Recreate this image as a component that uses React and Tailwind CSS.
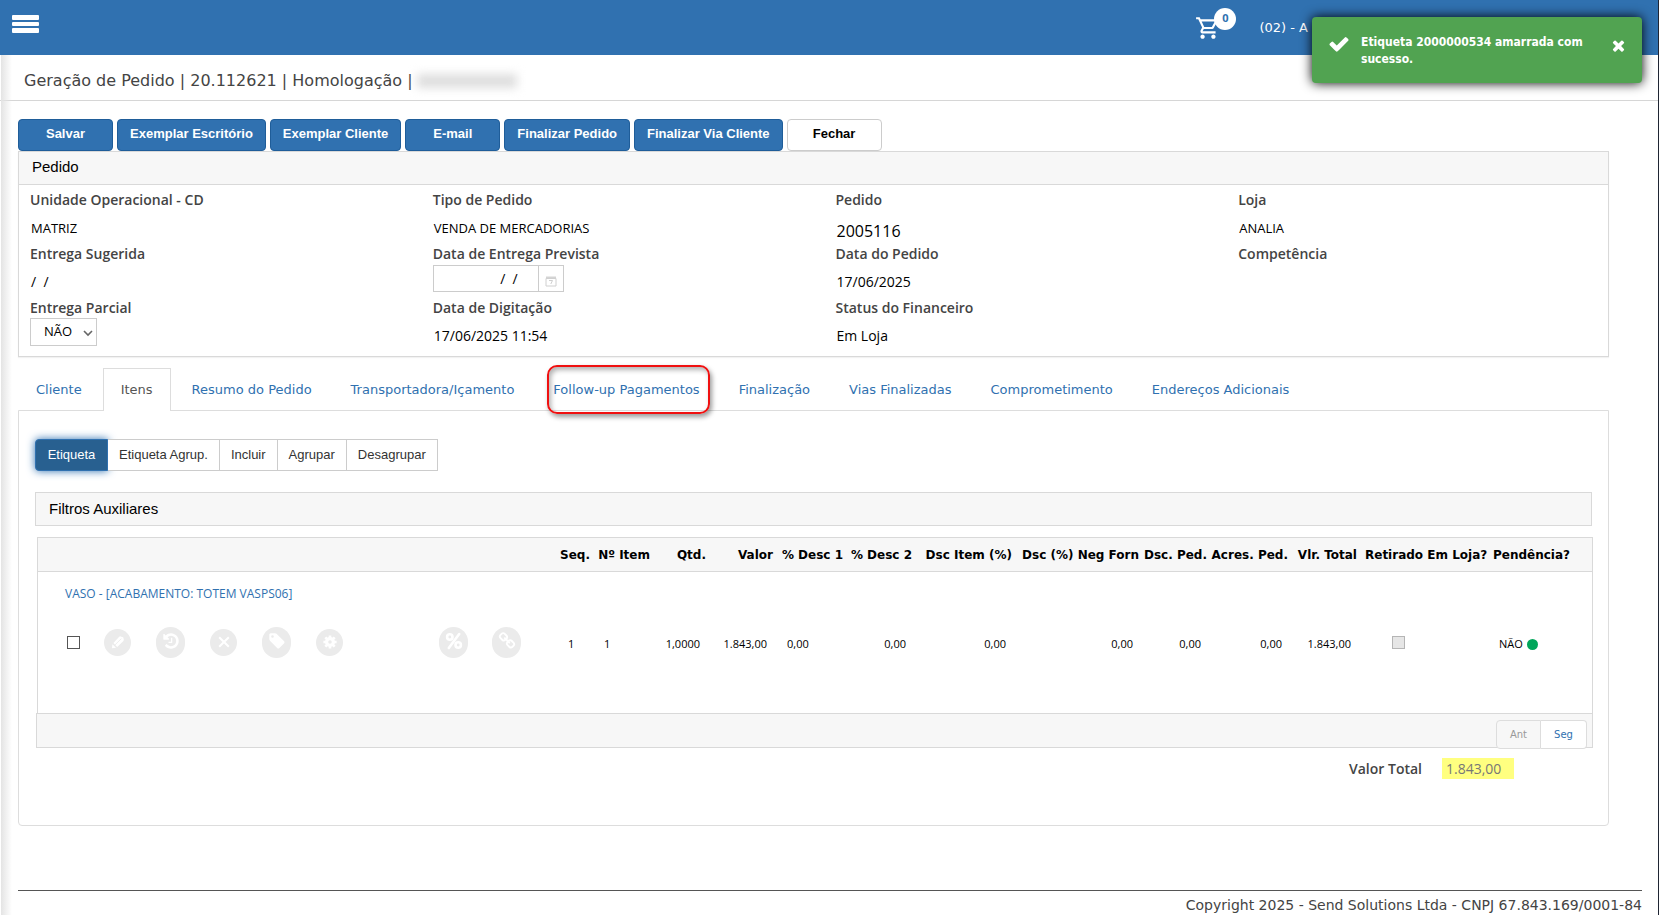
import React from 'react';
import { MdOutlineShoppingCart } from 'react-icons/md';

const ICON_PATHS = {
  check: 'M1671 566q0 40-28 68l-724 724-136 136q-28 28-68 28t-68-28l-136-136-362-362q-28-28-28-68t28-68l136-136q28-28 68-28t68 28l294 295 656-657q28-28 68-28t68 28l136 136q28 28 28 68z',
  times: 'M1490 1322q0 40-28 68l-136 136q-28 28-68 28t-68-28l-294-294-294 294q-28 28-68 28t-68-28l-136-136q-28-28-28-68t28-68l294-294-294-294q-28-28-28-68t28-68l136-136q28-28 68-28t68 28l294 294 294-294q28-28 68-28t68 28l136 136q28 28 28 68t-28 68l-294 294 294 294q28 28 28 68z',
  tag: 'M576 448q0-53-37.5-90.5t-90.5-37.5-90.5 37.5-37.5 90.5 37.5 90.5 90.5 37.5 90.5-37.5 37.5-90.5zm1067 576q0 53-37 90l-491 492q-39 37-91 37-53 0-90-37l-715-716q-38-37-64.5-101t-26.5-117v-416q0-52 38-90t90-38h416q53 0 117 26.5t102 64.5l715 714q37 39 37 91z',
  history: 'M1664 896q0 156-61 298t-164 245-245 164-298 61q-172 0-327-72.5t-264-204.5q-7-10-6.5-22.5t8.5-20.5l137-138q10-9 25-9 16 2 23 12 73 95 179 147t225 52q104 0 198.5-40.5t163.5-109.5 109.5-163.5 40.5-198.5-40.5-198.5-109.5-163.5-163.5-109.5-198.5-40.5q-98 0-188 35.5t-160 101.5l137 138q31 30 14 69-17 40-59 40h-448q-26 0-45-19t-19-45v-448q0-42 40-59 39-17 69 14l130 129q107-101 244.5-156.5t284.5-55.5q156 0 298 61t245 164 164 245 61 298zm-640-288v448q0 14-9 23t-23 9h-320q-14 0-23-9t-9-23v-64q0-14 9-23t23-9h224v-352q0-14 9-23t23-9h64q14 0 23 9t9 23z',
  link: 'M1520 1216q0-40-28-68l-208-208q-28-28-68-28-42 0-72 32 3 3 19 18.5t21.5 21.5 15 19 13 25.5 3.5 27.5q0 40-28 68t-68 28q-15 0-27.5-3.5t-25.5-13-19-15-21.5-21.5-18.5-19q-33 31-33 73 0 40 28 68l206 207q27 27 68 27 40 0 68-26l147-146q28-28 28-67zm-703-705q0-40-28-68l-206-207q-28-28-68-28-39 0-68 27l-147 146q-28 28-28 67 0 40 28 68l208 208q27 27 68 27 42 0 72-31-3-3-19-18.5t-21.5-21.5-15-19-13-25.5-3.5-27.5q0-40 28-68t68-28q15 0 27.5 3.5t25.5 13 19 15 21.5 21.5 18.5 19q33-31 33-73zm895 705q0 120-85 203l-147 146q-83 83-203 83-121 0-204-85l-206-207q-83-83-83-203 0-123 88-209l-88-88q-86 88-208 88-120 0-204-84l-208-208q-84-84-84-204t85-203l147-146q83-83 203-83 121 0 204 85l206 207q83 83 83 203 0 123-88 209l88 88q86-88 208-88 120 0 204 84l208 208q84 84 84 204z',
};

const Icon = ({ name, className }) => (
  <svg viewBox="0 0 1792 1792" fill="currentColor" className={className} aria-hidden="true">
    <path d={ICON_PATHS[name]} />
  </svg>
);

const PercentIcon = () => (
  <svg viewBox="0 0 18 18" className="w-[18px] h-[18px]" fill="none" stroke="currentColor" aria-hidden="true">
    <circle cx="4.8" cy="5" r="2.7" strokeWidth="2.6" />
    <circle cx="13.2" cy="13" r="2.7" strokeWidth="2.6" />
    <path d="M14.2 2 3.8 16" strokeWidth="2.6" strokeLinecap="round" />
  </svg>
);

const PencilIcon = () => (
  <svg viewBox="0 0 16 16" className="w-4 h-4" fill="currentColor" aria-hidden="true">
    <path d="M3.4 9 9.2 2.8a1.4 1.4 0 0 1 1.4-.4l2.6.8.6 2.4a1.4 1.4 0 0 1-.4 1.3L7.2 13z" />
    <path d="M2.4 10.2 6 13.8 2 14.2z" />
    <path d="M4.6 11.4 11.4 4.6" stroke="#ebebeb" strokeWidth="0.8" />
  </svg>
);

const CloseIcon = () => (
  <svg viewBox="0 0 16 16" className="w-4 h-4" fill="none" stroke="currentColor" strokeWidth="2" aria-hidden="true">
    <path d="M3.2 3.2 12.8 12.8M12.8 3.2 3.2 12.8" />
  </svg>
);

const GearIcon = () => (
  <svg viewBox="0 0 16 16" className="w-4 h-4" aria-hidden="true">
    <circle cx="8" cy="8" r="3.4" fill="none" stroke="currentColor" strokeWidth="3.2" />
    <g stroke="currentColor" strokeWidth="2.6">
      <path d="M8 1.4V4M8 12v2.6M1.4 8H4M12 8h2.6M3.3 3.3 5 5M11 11l1.7 1.7M12.7 3.3 11 5M5 11l-1.7 1.7" />
    </g>
  </svg>
);

const CalendarIcon = () => (
  <svg viewBox="0 0 12 12" className="w-3 h-3" aria-hidden="true">
    <path d="M1 1.5h10v2H1z" fill="#d4d4d4" />
    <path d="M1 3.5h10v7.5H1z" fill="none" stroke="#d0d0d0" />
    <path d="M4 5.5h3.5L5.8 9" fill="none" stroke="#cfcfcf" />
  </svg>
);

const TOOLBAR = ['Salvar', 'Exemplar Escritório', 'Exemplar Cliente', 'E-mail', 'Finalizar Pedido', 'Finalizar Via Cliente'];

const TABS = [
  'Cliente', 'Itens', 'Resumo do Pedido', 'Transportadora/Içamento', 'Follow-up Pagamentos',
  'Finalização', 'Vias Finalizadas', 'Comprometimento', 'Endereços Adicionais',
];

const GROUP = ['Etiqueta Agrup.', 'Incluir', 'Agrupar', 'Desagrupar'];

const COLUMNS = [
  { title: 'Seq.', width: 'w-[37px]', value: '1', cell: 'pt-1 text-left pl-[11px]' },
  { title: 'Nº Item', width: 'w-[60px]', value: '1', cell: 'pt-1 text-left pl-[10px]' },
  { title: 'Qtd.', width: 'w-[56px]', value: '1,0000', cell: 'pt-1 text-right pr-[10px]' },
  { title: 'Valor', width: 'w-[67px]', value: '1.843,00', cell: 'pt-1 text-right pr-[10px]' },
  { title: '% Desc 1', width: 'w-[70px]', value: '0,00', cell: 'pt-1 text-left pl-[10px]' },
  { title: '% Desc 2', width: 'w-[69px]', value: '0,00', cell: 'pt-1 text-right pr-[10px]' },
  { title: 'Dsc Item (%)', width: 'w-[100px]', value: '0,00', cell: 'pt-1 text-right pr-[10px]' },
  { title: 'Dsc (%) Neg Forn', width: 'w-[127px]', value: '0,00', cell: 'pt-1 text-right pr-[10px]' },
  { title: 'Dsc. Ped.', width: 'w-[68px]', value: '0,00', cell: 'pt-1 text-right pr-[10px]' },
  { title: 'Acres. Ped.', width: 'w-[81px]', value: '0,00', cell: 'pt-1 text-right pr-[10px]' },
  { title: 'Vlr. Total', width: 'w-[69px]', value: '1.843,00', cell: 'pt-1 text-right pr-[10px]' },
];

/** Label on top, value or control below */
const Field = ({ label, htmlFor, children }) => (
  <div>
    <label htmlFor={htmlFor} className="block h-5 leading-5 text-[14px] font-semibold text-[#444]">
      {label}
    </label>
    <div className="h-[34px] flex items-center text-[14px] text-black">{children}</div>
  </div>
);

const Value = ({ children }) => <span className="pl-px">{children}</span>;

const CapsValue = ({ children }) => <span className="pl-px pt-1 text-[13px]">{children}</span>;

const RoundButton = ({ label, small, children }) => (
  <span className="w-[53px] flex justify-center">
    <button
      type="button"
      disabled
      aria-label={label}
      className={
        small
          ? 'w-[27px] h-[27px] rounded-full bg-[#ebebeb] text-white flex items-center justify-center'
          : 'w-[29px] h-[31px] rounded-full bg-[#ebebeb] text-white flex items-center justify-center pb-[2px]'
      }
    >
      {children}
    </button>
  </span>
);

const Header = () => (
  <header className="h-[55px] bg-[#3071b0] flex items-start justify-between pl-3 pr-[350px]">
    <button type="button" aria-label="Menu" className="mt-[15px] flex flex-col gap-[2px]">
      <span className="w-[27px] h-[5px] rounded-[1px] bg-white" />
      <span className="w-[27px] h-[4px] rounded-[1px] bg-white" />
      <span className="w-[27px] h-[5px] rounded-[1px] bg-white" />
    </button>
    <div className="flex items-start text-white">
      <button type="button" aria-label="Carrinho" className="relative mt-[15px] mr-[38px]">
        <MdOutlineShoppingCart className="w-[26px] h-[26px]" />
        <span className="absolute left-[19px] -top-[7px] w-[22px] h-[22px] rounded-full bg-white text-[#3071b0] text-[11px] leading-[20px] font-bold">
          0
        </span>
      </button>
      <span className="mt-[18px] leading-5 text-[13px] font-['DejaVu_Sans',sans-serif]">(02) - A</span>
    </div>
  </header>
);

const Toast = () => (
  <div
    role="alert"
    className="absolute top-[17px] right-[16px] w-[330px] h-[66px] rounded-[4px] bg-[#51a351] text-white shadow-[0_0_12px_#000] flex items-start pl-[16px] pr-[15px]"
  >
    <Icon name="check" className="w-[22px] h-[22px] mt-4 shrink-0" />
    <p className="flex-1 mt-[17px] ml-[11px] pr-5 text-[12px] leading-[17px] font-bold font-['DejaVu_Sans_Condensed','DejaVu_Sans',sans-serif]">
      Etiqueta 2000000534 amarrada com sucesso.
    </p>
    <button type="button" aria-label="Fechar aviso" className="mt-5">
      <Icon name="times" className="w-[17px] h-[17px]" />
    </button>
  </div>
);

const OrderPanel = () => (
  <section className="border border-[#d9d9d9] shadow-[0_1px_1px_rgba(0,0,0,0.05)]">
    <h2 className="h-[33px] leading-[30px] pl-[13px] bg-[#f7f7f7] border-b border-[#d9d9d9] text-[15px] text-black font-['Liberation_Sans',sans-serif]">
      Pedido
    </h2>
    <div className="grid grid-cols-[403fr_403fr_403fr_370fr] pt-[5px] pl-[11px] pb-1">
      <Field label="Unidade Operacional - CD"><CapsValue>MATRIZ</CapsValue></Field>
      <Field label="Tipo de Pedido"><CapsValue>VENDA DE MERCADORIAS</CapsValue></Field>
      <Field label="Pedido"><span className="pl-px pt-2 text-[16px] font-medium">2005116</span></Field>
      <Field label="Loja"><CapsValue>ANALIA</CapsValue></Field>

      <Field label="Entrega Sugerida"><Value>/&nbsp;&nbsp;/</Value></Field>
      <Field label="Data de Entrega Prevista" htmlFor="entrega-prevista">
        <div className="flex h-7 self-start pt-px">
          <input
            id="entrega-prevista"
            type="text"
            defaultValue={'/\u00a0\u00a0/'}
            className="w-[106px] border border-[#ccc] pr-5 text-right text-[14px]"
          />
          <button type="button" aria-label="Abrir calendário" className="w-[25px] border border-l-0 border-[#ccc] flex items-center justify-center pt-1">
            <CalendarIcon />
          </button>
        </div>
      </Field>
      <Field label="Data do Pedido"><Value>17/06/2025</Value></Field>
      <Field label="Competência" />

      <Field label="Entrega Parcial" htmlFor="entrega-parcial">
        <div className="relative self-start">
          <select
            id="entrega-parcial"
            className="appearance-none w-[67px] h-[28px] border border-[#ccc] bg-white pl-[13px] text-[13px]"
            defaultValue="NÃO"
          >
            <option>NÃO</option>
            <option>SIM</option>
          </select>
          <svg viewBox="0 0 10 10" className="absolute right-1 top-[10px] w-[10px] h-[10px] pointer-events-none" fill="none" stroke="#666" strokeWidth="1.6">
            <path d="M1 3l4 4 4-4" />
          </svg>
        </div>
      </Field>
      <Field label="Data de Digitação"><Value>17/06/2025 11:54</Value></Field>
      <Field label="Status do Financeiro"><Value>Em Loja</Value></Field>
    </div>
  </section>
);

const TabBar = () => (
  <nav className="mt-[11px] flex gap-[3px] text-[13px] font-['DejaVu_Sans',sans-serif]">
    {TABS.map((tab) => (
      <a
        key={tab}
        href="#"
        className={
          tab === 'Itens'
            ? 'relative h-[43px] -mb-px px-[17px] leading-[42px] whitespace-nowrap border border-b-0 border-[#ddd] bg-white text-[#555]'
            : 'relative h-[42px] px-[18px] leading-[44px] whitespace-nowrap text-[#3071b0]'
        }
      >
        {tab}
        {tab === 'Follow-up Pagamentos' && (
          <span className="absolute -top-[3px] -bottom-[4px] left-[12px] right-[8px] z-10 rounded-[10px] border-2 border-[#f01010] shadow-[2px_3px_5px_rgba(0,0,0,0.4),inset_2px_3px_5px_rgba(0,0,0,0.3)]" />
        )}
      </a>
    ))}
  </nav>
);

const ItemsGrid = () => (
  <div className="mt-[11px] ml-[2px] -mr-px">
    <div className="border border-b-0 border-[#d9d9d9]">
      <table className="w-full table-fixed border-collapse text-black">
        <colgroup>
          <col />
          {COLUMNS.map((c) => <col key={c.title} className={c.width} />)}
          <col className="w-[128px]" />
          <col className="w-[103px]" />
        </colgroup>
        <thead>
          <tr className="h-[33px] bg-[#f7f7f7] border-b border-[#d9d9d9] text-[12px] font-['DejaVu_Sans',sans-serif] whitespace-nowrap">
            <td />
            {COLUMNS.map((c) => <th key={c.title} className="p-0 pt-[2px] pr-1 text-right font-bold">{c.title}</th>)}
            <th className="p-0 pt-[2px] pl-1 text-left font-bold">Retirado Em Loja?</th>
            <th className="p-0 pt-[2px] pl-1 text-left font-bold">Pendência?</th>
          </tr>
        </thead>
        <tbody>
          <tr className="h-[43px]">
            <td colSpan={14} className="p-0 pb-[2px] pl-[27px]">
              <a href="#" className="text-[12px] text-[#3071b0]">VASO - [ACABAMENTO: TOTEM VASPS06]</a>
            </td>
          </tr>
          <tr className="h-[56px] text-[11px]">
            <td className="p-0">
              <div className="flex items-center pl-[29px]">
                <input type="checkbox" aria-label="Selecionar item" className="appearance-none w-[13px] h-[13px] mr-[11px] border border-[#555] bg-white" />
                <RoundButton label="Editar" small><PencilIcon /></RoundButton>
                <RoundButton label="Histórico"><Icon name="history" className="w-[18px] h-[18px]" /></RoundButton>
                <RoundButton label="Excluir" small><CloseIcon /></RoundButton>
                <RoundButton label="Etiqueta"><Icon name="tag" className="w-[18px] h-[18px]" /></RoundButton>
                <RoundButton label="Configurar" small><GearIcon /></RoundButton>
                <span className="w-[71px]" />
                <RoundButton label="Desconto"><PercentIcon /></RoundButton>
                <RoundButton label="Vincular"><Icon name="link" className="w-[18px] h-[18px]" /></RoundButton>
              </div>
            </td>
            {COLUMNS.map((c) => <td key={c.title} className={c.cell}>{c.value}</td>)}
            <td className="p-0 pl-[31px]">
              <input type="checkbox" disabled aria-label="Retirado em loja" className="block appearance-none w-[13px] h-[13px] border border-[#b5b5b5] bg-[#e6e6e6]" />
            </td>
            <td className="p-0 pt-1 pl-[10px]">
              <div className="flex items-center gap-1">
                NÃO
                <span className="w-[11px] h-[11px] rounded-full bg-[#00a65a]" />
              </div>
            </td>
          </tr>
        </tbody>
      </table>
      <div className="h-[43px]" />
    </div>
    <div className="-ml-px h-[35px] flex justify-end items-start pt-[6px] pr-[5px] border border-[#d9d9d9] bg-[#f7f7f7] text-[10px] font-['DejaVu_Sans',sans-serif]">
      <button type="button" disabled className="w-[45px] h-[29px] rounded-l-[4px] border border-[#ddd] bg-[#f7f7f7] text-[#999]">Ant</button>
      <button type="button" className="w-[46px] h-[29px] rounded-r-[4px] border border-l-0 border-[#ddd] bg-white text-[#3071b0]">Seg</button>
    </div>
  </div>
);

const App = () => (
  <div className="relative min-h-screen flex flex-col bg-white border-r border-[#1f2533] font-['Open_Sans',sans-serif]">
    <Header />
    {/* Shadow thrown by the collapsed side menu */}
    <div className="absolute left-px top-[55px] bottom-0 w-[11px] bg-linear-to-r from-[#e4e4e4] to-transparent pointer-events-none" />
    <Toast />

    <div className="h-[46px] flex items-center pt-[6px] pl-6 border-b border-[#d6d6d6] text-[16px] text-[#444] font-['DejaVu_Sans',sans-serif]">
      <h1 className="whitespace-nowrap">Geração de Pedido | 20.112621 | Homologação |</h1>
      <span className="ml-1 w-[100px] h-[14px] bg-[#dedede] blur-[5px]" />
    </div>

    <main className="pt-[18px] pl-[18px] pr-[49px]">
      <div className="flex gap-1 text-[13px] font-bold font-['Liberation_Sans',sans-serif]">
        {TOOLBAR.map((label) => (
          <button key={label} type="button" className="h-8 min-w-[95px] px-[12px] pb-[2px] rounded-[4px] border border-[#1f5d99] bg-[#3071b0] text-white">
            {label}
          </button>
        ))}
        <button type="button" className="h-8 min-w-[95px] px-[12px] pb-[2px] rounded-[4px] border border-[#ccc] bg-white text-black">
          Fechar
        </button>
      </div>

      <OrderPanel />
      <TabBar />

      <section className="border border-[#ddd] rounded-b-[4px] px-4 pt-7 pb-[46px]">
        <div className="flex text-[13px] text-[#333] font-['Liberation_Sans',sans-serif]">
          <button type="button" className="h-8 w-[73px] rounded-l-[4px] border border-[#3071b0] bg-[#286090] text-white shadow-[0_0_8px_#3071b0]">
            Etiqueta
          </button>
          {GROUP.map((label) => (
            <button key={label} type="button" className="h-8 px-[11px] border border-l-0 border-[#ccc] bg-white">
              {label}
            </button>
          ))}
        </div>

        <h3 className="mt-[21px] h-[34px] leading-[32px] pl-[13px] border border-[#d9d9d9] bg-[#f7f7f7] text-[15px] text-black font-['Liberation_Sans',sans-serif]">
          Filtros Auxiliares
        </h3>

        <ItemsGrid />

        <div className="mt-[10px] pr-[78px] flex justify-end items-center text-[14px]">
          <span className="mr-5 font-semibold text-[#444]">Valor Total</span>
          <span className="w-[72px] h-[21px] leading-[21px] pl-1 bg-[#ffff80] text-[#777]">1.843,00</span>
        </div>
      </section>
    </main>

    <footer className="mt-auto ml-[18px] mr-4 h-[25px] border-t border-[#555] pt-1 leading-5 text-right text-[14px] text-[#444] font-['DejaVu_Sans',sans-serif]">
      Copyright 2025 - Send Solutions Ltda - CNPJ 67.843.169/0001-84
    </footer>
  </div>
);

export default App;
